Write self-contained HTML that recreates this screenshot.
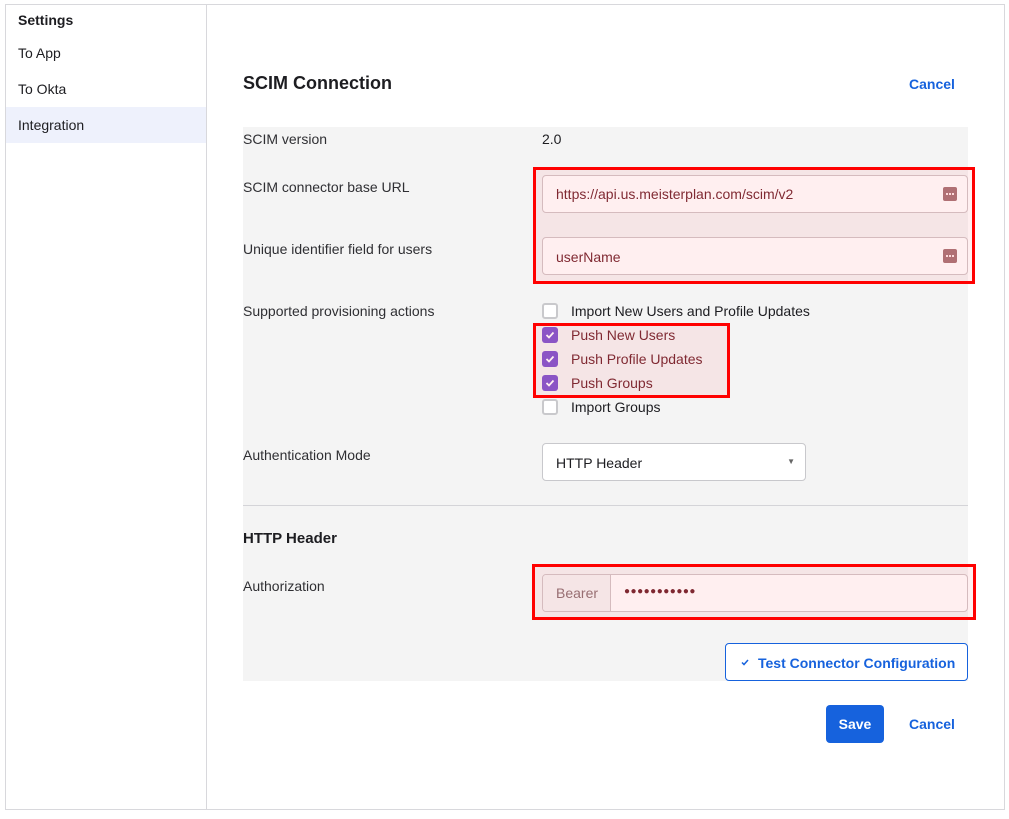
<!DOCTYPE html>
<html><head><meta charset="utf-8"><style>
*{box-sizing:border-box;margin:0;padding:0}
body{width:1009px;height:819px;background:#fff;font-family:"Liberation Sans",sans-serif;color:#1d1d21;position:relative;overflow:hidden;font-size:14px}
.a{position:absolute}
.lbl{position:absolute;left:243px;font-size:14px;color:#2f2f33}
.inp{position:absolute;background:#fff;border:1px solid #d0c4c6;border-radius:4px;font-size:14px;color:#6e1d26}
.ico{position:absolute;right:10px;top:11px;width:14px;height:14px;background:#a66f72;border-radius:2px}
.ico:after{content:"";position:absolute;left:3px;top:6px;width:2px;height:2px;background:#fde8e8;box-shadow:3px 0 #fde8e8,6px 0 #fde8e8}
.cb{position:absolute;left:542px;width:16px;height:16px;border-radius:3px}
.off{border:2px solid #c9c9cc;background:#fff}
.on{background:#7b4fcf}
.on svg{position:absolute;left:3px;top:3px}
.ct{position:absolute;left:571px;font-size:14px}
.red{position:absolute;border:3px solid #f00;background:rgba(255,120,130,.12)}
</style></head><body>
<div class="a" style="left:5px;top:4px;width:1000px;height:806px;border:1px solid #d8d8dc"></div>
<div class="a" style="left:206px;top:5px;width:1px;height:804px;background:#d8d8dc"></div>
<div class="a" style="left:6px;top:107px;width:200px;height:36px;background:#eef1fc"></div>
<div class="a" style="left:18px;top:12px;font-weight:bold;font-size:14px">Settings</div>
<div class="a" style="left:18px;top:45px">To App</div>
<div class="a" style="left:18px;top:81px">To Okta</div>
<div class="a" style="left:18px;top:117px">Integration</div>

<div class="a" style="left:243px;top:73px;font-size:18px;font-weight:bold">SCIM Connection</div>
<div class="a" style="left:909px;top:76px;color:#1662dd;font-weight:bold">Cancel</div>

<div class="a" style="left:243px;top:127px;width:725px;height:554px;background:#f4f4f4"></div>
<div class="a" style="left:243px;top:505px;width:725px;height:1px;background:#d4d4d8"></div>

<div class="lbl" style="top:131px">SCIM version</div>
<div class="a" style="left:542px;top:131px">2.0</div>
<div class="lbl" style="top:179px">SCIM connector base URL</div>
<div class="inp" style="left:542px;top:175px;width:426px;height:38px;padding:10px 13px">https://api.us.meisterplan.com/scim/v2<div class="ico"></div></div>
<div class="lbl" style="top:241px">Unique identifier field for users</div>
<div class="inp" style="left:542px;top:237px;width:426px;height:38px;padding:11px 13px">userName<div class="ico"></div></div>

<div class="lbl" style="top:303px">Supported provisioning actions</div>
<div class="cb off" style="top:303px"></div><div class="ct" style="top:303px">Import New Users and Profile Updates</div>
<div class="cb on" style="top:327px"><svg width="10" height="10" viewBox="0 0 10 10"><path d="M1.5 5l2.5 2.5 4.5-5" stroke="#fff" stroke-width="1.8" fill="none"/></svg></div><div class="ct" style="top:327px;color:#6e1d26">Push New Users</div>
<div class="cb on" style="top:351px"><svg width="10" height="10" viewBox="0 0 10 10"><path d="M1.5 5l2.5 2.5 4.5-5" stroke="#fff" stroke-width="1.8" fill="none"/></svg></div><div class="ct" style="top:351px;color:#6e1d26">Push Profile Updates</div>
<div class="cb on" style="top:375px"><svg width="10" height="10" viewBox="0 0 10 10"><path d="M1.5 5l2.5 2.5 4.5-5" stroke="#fff" stroke-width="1.8" fill="none"/></svg></div><div class="ct" style="top:375px;color:#6e1d26">Push Groups</div>
<div class="cb off" style="top:399px"></div><div class="ct" style="top:399px">Import Groups</div>

<div class="lbl" style="top:447px">Authentication Mode</div>
<div class="a" style="left:542px;top:443px;width:264px;height:38px;background:#fff;border:1px solid #c8c8cc;border-radius:4px;padding:11px 13px">HTTP Header<span class="a" style="right:10px;top:13px;font-size:8px;color:#666">▼</span></div>

<div class="a" style="left:243px;top:530px;font-size:15px;font-weight:bold">HTTP Header</div>
<div class="lbl" style="top:578px">Authorization</div>
<div class="inp" style="left:542px;top:574px;width:426px;height:38px;overflow:hidden">
<div class="a" style="left:0;top:0;width:68px;height:36px;background:#f4f4f4;border-right:1px solid #d0c4c6;color:#8a6d70;padding:10px 13px">Bearer</div>
<div class="a" style="left:81px;top:11px;font-size:10px;letter-spacing:0.5px;color:#6e1d26">●●●●●●●●●●●</div></div>

<div class="a" style="left:725px;top:643px;width:243px;height:38px;border:1px solid #1662dd;border-radius:4px;background:#fff;color:#1662dd;font-weight:bold;padding:11px 0 0 32px">Test Connector Configuration<svg class="a" style="left:15px;top:15px" width="8" height="7" viewBox="0 0 8 7"><path d="M1 3.5l2 2 4-4.5" stroke="#1662dd" stroke-width="1.5" fill="none"/></svg></div>

<div class="a" style="left:826px;top:705px;width:58px;height:38px;background:#1662dd;border-radius:4px;color:#fff;font-weight:bold;text-align:center;line-height:38px">Save</div>
<div class="a" style="left:909px;top:716px;color:#1662dd;font-weight:bold">Cancel</div>

<div class="red" style="left:533px;top:167px;width:442px;height:117px"></div>
<div class="red" style="left:533px;top:323px;width:197px;height:75px"></div>
<div class="red" style="left:532px;top:564px;width:444px;height:56px"></div>
</body></html>
